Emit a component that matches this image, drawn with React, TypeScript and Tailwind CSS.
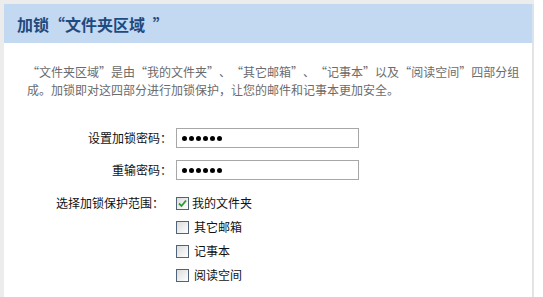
function Open({ w = 'w-[12px]' }: { w?: string }) {
  return <span className={`inline-block ${w} text-right`}>“</span>;
}

function Close({ w = 'w-[12px]' }: { w?: string }) {
  return <span className={`inline-block ${w} text-left`}>”</span>;
}

export default function App() {
  const scopes = [
    { label: '我的文件夹', checked: true },
    { label: '其它邮箱', checked: false },
    { label: '记事本', checked: false },
    { label: '阅读空间', checked: false },
  ];

  const dots = (
    <div className="flex gap-[2px]">
      {[0, 1, 2, 3, 4, 5].map((i) => (
        <span key={i} className="w-[5px] h-[5px] rounded-full bg-black" />
      ))}
    </div>
  );

  return (
    <div
      lang="zh-CN"
      className="flex w-[543px] h-[297px] overflow-hidden bg-white"
      style={{ fontFamily: '"Noto Sans CJK SC", "Liberation Sans", sans-serif' }}
    >
      {/* left frame strip */}
      <div className="w-[4px] h-full bg-[#ececec]" />

      {/* PANEL */}
      <div className="flex flex-col w-[530px] h-full border-t-[4px] border-[#ececec]">
        <div className="h-[39px] flex items-center px-[13px] bg-[#c3d8f1] border-r-[2px] border-[#d9e3ee]">
          <span className="text-[16px] font-bold text-[#1f4a7e] leading-none whitespace-pre">
            加锁<span className="inline-block w-[16px] text-center">“</span>文件夹区域 <span className="inline-block w-[16px] ml-[4px] text-left">”</span>
          </span>
        </div>

        <div className="flex-1 border-r-[2px] border-[#e4e4e4]">
          <p className="mt-[20px] ml-[23px] w-[496px] text-[12px] leading-[18px] text-[#6b6b6b]">
            <Open />文件夹区域<Close />是由<Open />我的文件夹<Close />、<Open />其它邮箱<Close />、<Open />记事本<Close />以及<Open />阅读空间<Close />四部分组成。加锁即对这四部分进行加锁保护，让您的邮件和记事本更加安全。
          </p>

          <div className="mt-[29px] flex flex-col gap-[12px] text-[12px] text-[#111]">
            <div className="flex items-center">
              <span className="w-[168px] text-right">设置加锁密码：</span>
              <div className="ml-[4px] w-[183px] h-[20px] flex items-center px-[5px] border border-[#a7a7a7] bg-white">
                {dots}
              </div>
            </div>
            <div className="flex items-center">
              <span className="w-[168px] text-right">重输密码：</span>
              <div className="ml-[4px] w-[183px] h-[20px] flex items-center px-[5px] border border-[#a7a7a7] bg-white">
                {dots}
              </div>
            </div>
          </div>

          <div className="mt-[11px] flex text-[12px] text-[#111]">
            <span className="w-[168px] pl-[52px] leading-[24px]">选择加锁保护范围：</span>
            <div className="ml-[4px] flex flex-col">
              {scopes.map((s) => (
                <label key={s.label} className="flex items-center h-[24px]">
                  <span className="w-[13px] h-[13px] border border-[#4f6478] bg-gradient-to-br from-[#dcdcdc] to-white flex items-center justify-center">
                    {s.checked && (
                      <svg width="9" height="9" viewBox="0 0 9 9">
                        <path d="M1 4.5 L3.5 7 L8 1.5" stroke="#2e9a2e" strokeWidth="1.8" fill="none" />
                      </svg>
                    )}
                  </span>
                  <span className={s.checked ? 'ml-[3px]' : 'ml-[5px]'}>{s.label}</span>
                </label>
              ))}
            </div>
          </div>
        </div>
      </div>
    </div>
  );
}
